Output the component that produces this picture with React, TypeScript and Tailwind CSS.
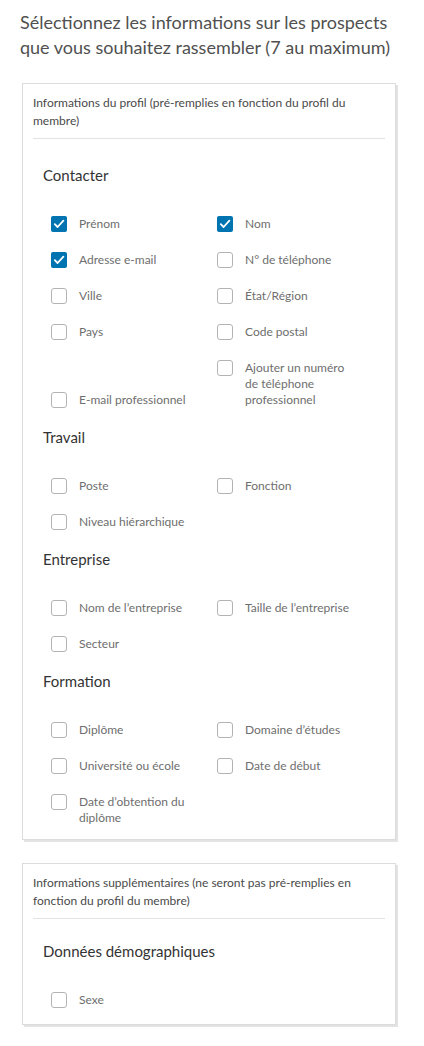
import React from 'react'

type Field = { label: string; checked?: boolean }

const sections: { title: string; rows: Field[][] }[] = [
  {
    title: 'Contacter',
    rows: [
      [{ label: 'Prénom', checked: true }, { label: 'Nom', checked: true }],
      [{ label: 'Adresse e-mail', checked: true }, { label: 'N° de téléphone' }],
      [{ label: 'Ville' }, { label: 'État/Région' }],
      [{ label: 'Pays' }, { label: 'Code postal' }],
      [{ label: 'E-mail professionnel' }, { label: 'Ajouter un numéro de téléphone professionnel' }],
    ],
  },
  {
    title: 'Travail',
    rows: [
      [{ label: 'Poste' }, { label: 'Fonction' }],
      [{ label: 'Niveau hiérarchique' }],
    ],
  },
  {
    title: 'Entreprise',
    rows: [
      [{ label: 'Nom de l’entreprise' }, { label: 'Taille de l’entreprise' }],
      [{ label: 'Secteur' }],
    ],
  },
  {
    title: 'Formation',
    rows: [
      [{ label: 'Diplôme' }, { label: 'Domaine d’études' }],
      [{ label: 'Université ou école' }, { label: 'Date de début' }],
      [{ label: 'Date d’obtention du diplôme' }],
    ],
  },
]

function Checkbox({ checked }: { checked?: boolean }) {
  if (checked) {
    return (
      <span className="flex h-4 w-4 shrink-0 items-center justify-center rounded-[2px] bg-[#0073b1]">
        <svg width="12" height="12" viewBox="0 0 12 12" fill="none">
          <path d="M1.8 6.2 L4.6 9 L10.4 2.6" stroke="white" strokeWidth="1.8" strokeLinecap="round" strokeLinejoin="round" />
        </svg>
      </span>
    )
  }
  return <span className="block h-4 w-4 shrink-0 rounded-[3px] border border-[#b3b3b3] bg-white" />
}

function Option({ field }: { field: Field }) {
  return (
    <label className="flex w-[166px] items-start">
      <Checkbox checked={field.checked} />
      <span className="ml-3 max-w-[108px] text-[12px] leading-4 text-[#6e6e6e]">{field.label}</span>
    </label>
  )
}

function Section({ title, rows }: { title: string; rows: Field[][] }) {
  return (
    <div className="pl-[20px] pr-3">
      <h3 className="text-[15px] leading-5 text-[#333]">{title}</h3>
      <div className="mt-[31px] flex flex-col gap-5 pl-2">
        {rows.map((row, i) => (
          <div key={i} className="flex items-end">
            {row.map(f => (
              <Option key={f.label} field={f} />
            ))}
          </div>
        ))}
      </div>
    </div>
  )
}

export default function App() {
  return (
    <div className="min-h-[1046px] bg-white px-5 pt-[10px] pb-6 font-['Lato',sans-serif]">
      <h1 className="text-[18px] leading-[25px] text-[#505050]">
        Sélectionnez les informations sur les prospects que vous souhaitez rassembler (7 au maximum)
      </h1>

      <div className="mt-[23px] ml-[2px] w-[374px] border border-[#dcdcdc] bg-white pb-[13px] shadow-[2px_2px_0_#e3e3e3]">
        <div className="mx-[10px] border-b border-[#e3e3e3] pt-[10px] pb-[8px]">
          <p className="text-[12px] leading-[18px] text-[#4a4a4a]">
            Informations du profil (pré-remplies en fonction du profil du membre)
          </p>
        </div>
        <div className="flex flex-col gap-[19px] pt-[26px]">
          {sections.map(s => (
            <Section key={s.title} title={s.title} rows={s.rows} />
          ))}
        </div>
      </div>

      <div className="mt-[23px] ml-[2px] w-[374px] border border-[#dcdcdc] bg-white pb-[16px] shadow-[2px_2px_0_#e3e3e3]">
        <div className="mx-[10px] border-b border-[#e3e3e3] pt-[10px] pb-[8px]">
          <p className="text-[12px] leading-[18px] text-[#4a4a4a]">
            Informations supplémentaires (ne seront pas pré-remplies en fonction du profil du membre)
          </p>
        </div>
        <div className="pt-[22px]">
          <Section title="Données démographiques" rows={[[{ label: 'Sexe' }]]} />
        </div>
      </div>
    </div>
  )
}
